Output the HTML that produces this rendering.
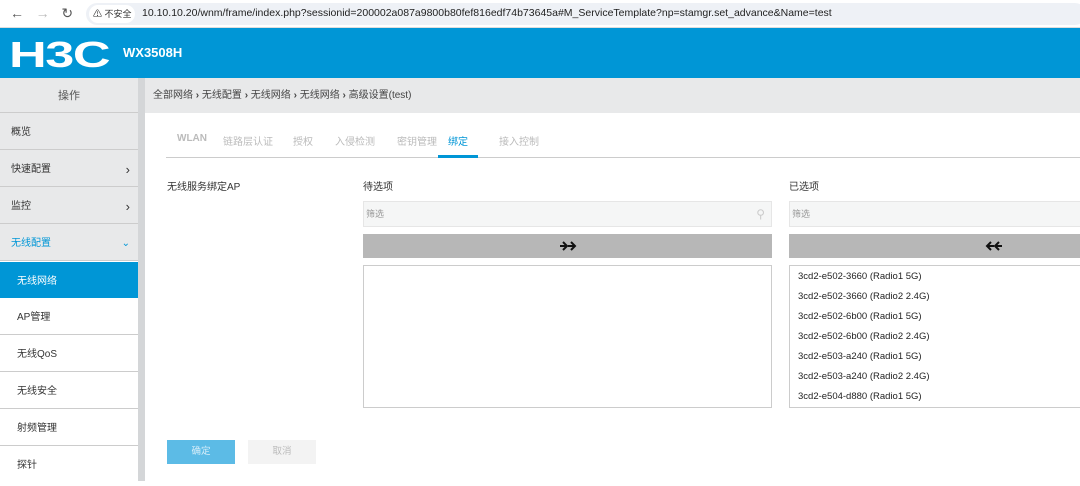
<!DOCTYPE html>
<html><head><meta charset="utf-8"><style>
*{margin:0;padding:0;box-sizing:border-box}
body{width:1080px;height:481px;overflow:hidden;background:#fff;font-family:"Liberation Sans","Noto Sans CJK SC",sans-serif;font-size:10px;color:#333;position:relative}
.abs{position:absolute}
.bar{left:0;top:0;width:1080px;height:28px;background:#fff;border-bottom:1px solid #ddd}
.url{left:86px;top:3px;width:1000px;height:22px;background:#eef1f6;border-radius:11px}
.hdr{left:0;top:28px;width:1080px;height:50px;background:#0096d6}
.side{left:0;top:78px;width:138px;height:403px;background:#fff}
.sep{left:138px;top:78px;width:7px;height:403px;background:#d4d6d8}
.item{position:absolute;left:0;width:138px;height:37px;border-bottom:1px solid #ccc;line-height:40px;font-size:10px}
.crumb{left:145px;top:78px;width:935px;height:35px;background:#e8e9ea;line-height:35px;padding-left:8px;font-size:10px;color:#444}
.tab{position:absolute;top:133px;font-size:10px;color:#bbb}
.box{position:absolute;border:1px solid #ccc;background:#fff}
.flt{position:absolute;background:#f5f6f6;border:1px solid #e6e6e6;height:26px;line-height:24px;padding-left:2px;color:#999;font-size:9px}
.btn{position:absolute;background:#b7b7b7;height:24px}
.btn svg{position:absolute;top:7px}
.li{font-size:9.5px;color:#222;height:20px;line-height:20px;padding-left:8px}
</style></head><body>
<div class="abs bar"></div>
<div class="abs" style="left:10px;top:5px;font-size:14px;color:#555">←&nbsp;&nbsp;&nbsp;<span style="color:#bbb">→</span>&nbsp;&nbsp;&nbsp;&#x21bb;</div>
<div class="abs url"></div>
<div class="abs" style="left:89px;top:5px;height:18px;width:46px;background:#fff;border-radius:9px;font-size:9px;line-height:18px;padding-left:4px;color:#333">⚠ 不安全</div>
<div class="abs" style="left:142px;top:7px;font-size:10.5px;color:#222">10.10.10.20/wnm/frame/index.php?sessionid=200002a087a9800b80fef816edf74b73645a#M_ServiceTemplate?np=stamgr.set_advance&amp;Name=test</div>
<div class="abs hdr"></div>
<div class="abs" style="left:9px;top:35px;font-size:36px;font-weight:bold;color:#fff;letter-spacing:-1px;line-height:40px;transform:scaleX(1.45);transform-origin:left">H3C</div>
<div class="abs" style="left:123px;top:45px;font-size:13px;font-weight:bold;color:#fff">WX3508H</div>
<div class="abs side">
<div class="item" style="top:0;height:35px;line-height:36px;background:#e8e9ea;text-align:center;font-size:11px;color:#555">操作</div>
<div class="item" style="top:35px;background:#e8e9ea;padding-left:11px">概览</div>
<div class="item" style="top:72px;background:#e8e9ea;padding-left:11px">快速配置<span style="position:absolute;right:8px;font-size:13px">›</span></div>
<div class="item" style="top:109px;background:#e8e9ea;padding-left:11px">监控<span style="position:absolute;right:8px;font-size:13px">›</span></div>
<div class="item" style="top:146px;background:#e8e9ea;padding-left:11px;color:#0096d6">无线配置<span style="position:absolute;right:8px;font-size:10px">⌄</span></div>
<div class="item" style="top:184px;height:36px;background:#0096d6;color:#fff;padding-left:17px;border:none">无线网络</div>
<div class="item" style="top:220px;padding-left:17px">AP管理</div>
<div class="item" style="top:257px;padding-left:17px">无线QoS</div>
<div class="item" style="top:294px;padding-left:17px">无线安全</div>
<div class="item" style="top:331px;padding-left:17px">射频管理</div>
<div class="item" style="top:368px;padding-left:17px;border:none">探针</div>
</div>
<div class="abs sep"></div>
<div class="abs crumb">全部网络 <b>›</b> 无线配置 <b>›</b> 无线网络 <b>›</b> 无线网络 <b>›</b> 高级设置(test)</div>
<div class="tab" style="left:177px;font-weight:bold">WLAN</div>
<div class="tab" style="left:223px">链路层认证</div>
<div class="tab" style="left:293px">授权</div>
<div class="tab" style="left:335px">入侵检测</div>
<div class="tab" style="left:397px">密钥管理</div>
<div class="tab" style="left:448px;color:#0096d6">绑定</div>
<div class="tab" style="left:499px">接入控制</div>
<div class="abs" style="left:166px;top:157px;width:914px;height:1px;background:#ccc"></div>
<div class="abs" style="left:438px;top:155px;width:40px;height:3px;background:#0096d6"></div>
<div class="abs" style="left:167px;top:178px;font-size:10px">无线服务绑定AP</div>
<div class="abs" style="left:363px;top:178px;font-size:10px">待选项</div>
<div class="abs" style="left:789px;top:178px;font-size:10px">已选项</div>
<div class="flt" style="left:363px;top:201px;width:409px">筛选<span style="position:absolute;right:6px;top:0;color:#ccc;font-size:12px">&#9906;</span></div>
<div class="flt" style="left:789px;top:201px;width:300px">筛选</div>
<div class="btn" style="left:363px;top:234px;width:409px"><svg style="left:197px" width="17" height="10" viewBox="0 0 17 10" fill="none" stroke="#111" stroke-width="2"><path d="M0 5H7M3 1L7 5L3 9M8 5H15M11 1L15 5L11 9"/></svg></div>
<div class="btn" style="left:789px;top:234px;width:300px"><svg style="left:196px" width="17" height="10" viewBox="0 0 17 10" fill="none" stroke="#111" stroke-width="2"><path d="M2 5H9M6 1L2 5L6 9M10 5H17M14 1L10 5L14 9"/></svg></div>
<div class="box" style="left:363px;top:265px;width:409px;height:143px"></div>
<div class="box" style="left:789px;top:265px;width:300px;height:143px;padding-top:1px">
<div class="li">3cd2-e502-3660 (Radio1 5G)</div>
<div class="li">3cd2-e502-3660 (Radio2 2.4G)</div>
<div class="li">3cd2-e502-6b00 (Radio1 5G)</div>
<div class="li">3cd2-e502-6b00 (Radio2 2.4G)</div>
<div class="li">3cd2-e503-a240 (Radio1 5G)</div>
<div class="li">3cd2-e503-a240 (Radio2 2.4G)</div>
<div class="li">3cd2-e504-d880 (Radio1 5G)</div>
</div>
<div class="abs" style="left:167px;top:440px;width:68px;height:24px;background:#5cbbe6;color:#d8eef9;text-align:center;line-height:24px;font-size:9.5px">确定</div>
<div class="abs" style="left:248px;top:440px;width:68px;height:24px;background:#f3f3f3;color:#bbb;text-align:center;line-height:24px;font-size:9.5px">取消</div>
</body></html>
